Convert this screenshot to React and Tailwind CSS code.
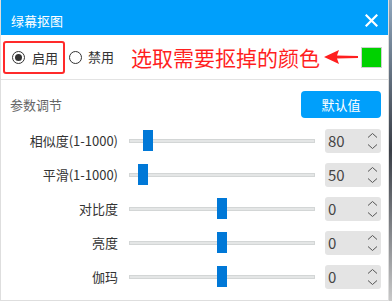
import React from "react";

const cjk = { fontFamily: '"Noto Sans CJK SC", "Noto Sans", sans-serif' };

function Radio({ checked }) {
  return (
    <span className="flex h-[13px] w-[13px] items-center justify-center rounded-full border border-[#333] bg-white">
      {checked && <span className="h-[7px] w-[7px] rounded-full bg-[#333]" />}
    </span>
  );
}

function Chevrons() {
  return (
    <svg width="11" height="18" viewBox="0 0 11 18" fill="none" stroke="#555" strokeWidth="1">
      <path d="M1 5.5 L5.5 1.5 L10 5.5" />
      <path d="M1 12.5 L5.5 16.5 L10 12.5" />
    </svg>
  );
}

function SliderRow({ label, value, thumb }) {
  return (
    <div className="flex h-[34px] items-center">
      <div className="w-[117px] text-right text-[13px] text-[#333]" style={cjk}>
        {label}
      </div>
      <div className="relative ml-[11px] h-[4px] w-[186px] border border-[#d3d6d6] bg-[#e4e6e6]">
        <div
          className="absolute top-[-10px] h-[21px] w-[10px] bg-[#0078d7]"
          style={{ left: thumb }}
        />
      </div>
      <div className="ml-[10px] flex h-[24px] w-[56px] items-center justify-between rounded-[3px] bg-[#e4e4e4] pl-[3px] pr-[3px]">
        <span className="text-[15px] text-[#444]" style={cjk}>
          {value}
        </span>
        <Chevrons />
      </div>
    </div>
  );
}

export default function App() {
  return (
    <div className="flex h-[301px] w-[392px] bg-white" style={cjk}>
      <div className="flex w-[389px] flex-col border-r border-b border-l border-[#dedede] bg-white">
        {/* title bar */}
        <div className="flex h-[35px] items-center justify-between bg-[#009ffb] pt-[6px] pl-[10px] pr-[10px]">
          <span className="text-[13px] text-white">绿幕抠图</span>
          <svg width="13" height="13" viewBox="0 0 13 13" stroke="white" strokeWidth="2.2" strokeLinecap="square">
            <path d="M1.5 1.5 L11.5 11.5 M11.5 1.5 L1.5 11.5" />
          </svg>
        </div>
        {/* enable row */}
        <div className="flex h-[45px] items-center border-b border-[#e3e3e3] pl-[2px]">
          <div className="mt-[1px] flex h-[33px] w-[62px] items-center rounded-[3px] border-2 border-[#ff2a2a] pl-[7px]">
            <Radio checked />
            <span className="ml-[7px] text-[13px] text-[#333]">启用</span>
          </div>
          <div className="ml-[4px] flex items-center">
            <Radio />
            <span className="ml-[6px] text-[13px] text-[#333]">禁用</span>
          </div>
          <span className="ml-[17px] text-[21px] leading-none text-[#ff1f1f]">选取需要抠掉的颜色</span>
          <svg className="ml-[4px]" width="34" height="16" viewBox="0 0 34 16">
            <polygon points="0,8 15,1 13,6.5 34,7 34,9 13,9.5 15,15" fill="#ff1f1f" />
          </svg>
          <div className="ml-[3px] h-[21px] w-[21px] border border-[#cfcfcf] bg-[#00d200]" />
        </div>
        {/* params */}
        <div className="flex flex-col pt-[11px]">
          <div className="flex h-[27px] items-center justify-between pl-[9px] pr-[7px]">
            <span className="text-[13px] text-[#666]">参数调节</span>
            <button className="flex h-[27px] w-[80px] items-center justify-center rounded-[4px] bg-[#009ffb] text-[13px] text-white">
              默认值
            </button>
          </div>
          <div className="mt-[6px] flex flex-col">
            <SliderRow label="相似度(1-1000)" value="80" thumb={13} />
            <SliderRow label="平滑(1-1000)" value="50" thumb={8} />
            <SliderRow label="对比度" value="0" thumb={87} />
            <SliderRow label="亮度" value="0" thumb={87} />
            <SliderRow label="伽玛" value="0" thumb={87} />
          </div>
        </div>
      </div>
      <div className="h-full w-[3px] bg-gradient-to-b from-[#8fa6bd] via-[#3a3f47] to-[#c9c9c9]" />
    </div>
  );
}
